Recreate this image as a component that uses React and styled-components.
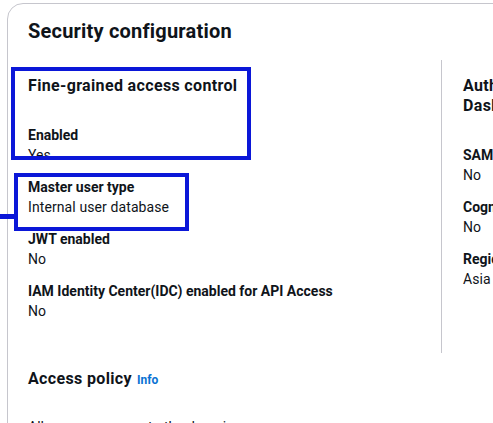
import React from 'react'
import styled, { createGlobalStyle } from 'styled-components'

const GlobalStyle = createGlobalStyle`
  body {
    margin: 0;
    background: #ffffff;
    overflow: hidden;
    font-family: Roboto, "Open Sans", Arial, sans-serif;
    color: #0f141a;
  }
`

const Page = styled.div`
  position: relative;
  height: 100vh;
  padding: 3px 0 0 7px;
`

const Card = styled.section`
  width: 740px;
  min-height: 520px;
  border: 1px solid #c6c6cd;
  border-radius: 16px;
  padding: 15px 20px 0;
  box-sizing: border-box;
`

const Title = styled.h2`
  margin: 0;
  font-size: 20px;
  line-height: 24px;
  font-weight: 700;
  letter-spacing: 0.2px;
`

const Columns = styled.div`
  display: grid;
  grid-template-columns: 413px 1fr;
  margin-top: 17px;
`

const Column = styled.div`
  padding: 16px 0 32px;
  ${({ $divider }) => $divider && `
    border-left: 1px solid #c6c6cd;
    padding-left: 21px;
  `}
`

const Heading = styled.h3`
  margin: 0 0 29px;
  font-size: 16px;
  line-height: 20px;
  font-weight: 700;
  letter-spacing: 0.35px;
  max-width: ${({ $wrap }) => ($wrap ? '260px' : 'none')};
`

const Pairs = styled.div`
  display: flex;
  flex-direction: column;
  gap: 12px;
`

const Label = styled.div`
  font-size: 14px;
  line-height: 20px;
  font-weight: 700;
  white-space: nowrap;
`

const Value = styled.div`
  font-size: 14px;
  line-height: 20px;
  white-space: nowrap;
  letter-spacing: 0.1px;
`

const SectionHeader = styled.h2`
  margin: 16px 0 0;
  font-size: 16px;
  line-height: 20px;
  font-weight: 700;
  letter-spacing: 0.35px;
  display: flex;
  align-items: baseline;
  gap: 5px;
`

const InfoLink = styled.a`
  font-size: 12px;
  font-weight: 700;
  letter-spacing: 0;
  color: #0972d3;
  text-decoration: none;
`

const Para = styled.p`
  margin: 27px 0 0;
  font-size: 14px;
  line-height: 20px;
`

const Callout = styled.div`
  position: absolute;
  left: ${({ $x }) => $x}px;
  top: ${({ $y }) => $y}px;
  width: ${({ $w }) => $w}px;
  height: ${({ $h }) => $h}px;
  border: 4px solid #0b17d8;
  box-sizing: border-box;
  pointer-events: none;
`

const Connector = styled.div`
  position: absolute;
  left: 0;
  top: 214px;
  width: 14px;
  height: 5px;
  background: #0b17d8;
`

const Pair = ({ label, value }) => (
  <div>
    <Label>{label}</Label>
    <Value>{value}</Value>
  </div>
)

const App = () => {
  return (
    <>
      <GlobalStyle />
      <Page>
        <Card>
          <Title>Security configuration</Title>
          <Columns>
            <Column>
              <Heading>Fine-grained access control</Heading>
              <Pairs>
                <Pair label="Enabled" value="Yes" />
                <Pair label="Master user type" value="Internal user database" />
                <Pair label="JWT enabled" value="No" />
                <Pair label="IAM Identity Center(IDC) enabled for API Access" value="No" />
              </Pairs>
            </Column>
            <Column $divider>
              <Heading $wrap>Authentication for OpenSearch Dashboards/Kibana</Heading>
              <Pairs>
                <Pair label="SAML authentication enabled" value="No" />
                <Pair label="Cognito authentication enabled" value="No" />
                <Pair label="Region" value="Asia Pacific (Tokyo)" />
              </Pairs>
            </Column>
          </Columns>
          <SectionHeader>
            Access policy <InfoLink href="#">Info</InfoLink>
          </SectionHeader>
          <Para>Allow open access to the domain</Para>
        </Card>
        <Callout $x={11} $y={67} $w={240} $h={93} />
        <Callout $x={14} $y={173} $w={175} $h={58} />
        <Connector />
      </Page>
    </>
  )
}

export default App
